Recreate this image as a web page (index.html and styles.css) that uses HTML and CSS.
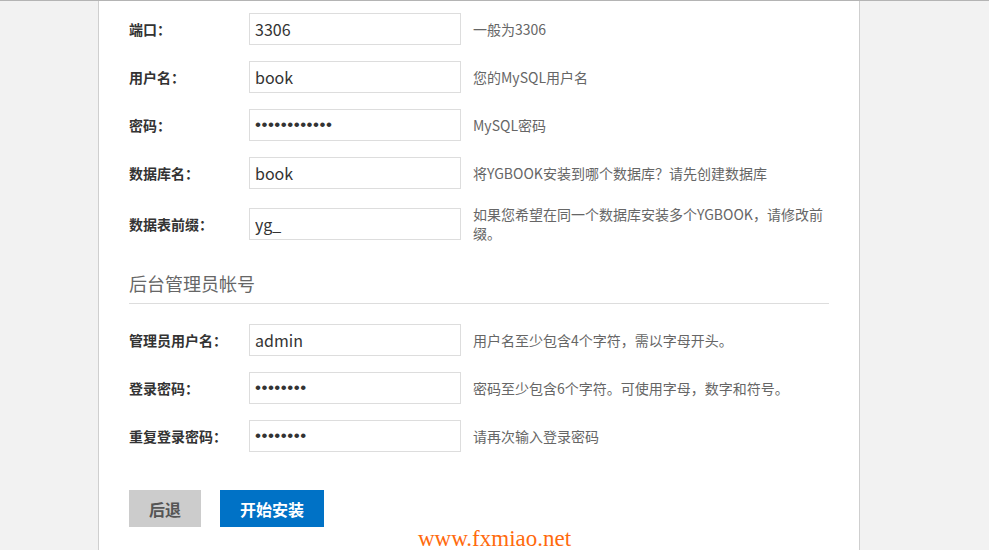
FILE: index.html
```html
<!DOCTYPE html>
<html lang="zh-CN">
  <head>
    <meta charset="UTF-8" />
    <title>YGBOOK 安装</title>
    <link rel="stylesheet" href="styles.css">
  </head>

  <body>
    <div class="main">
      <form class="install-form">
        <!-- 数据库 -->
        <div class="row">
          <label class="label">端口：</label>
          <input class="field" type="text" value="3306" />
          <span class="tip">一般为3306</span>
        </div>
        <div class="row">
          <label class="label">用户名：</label>
          <input class="field" type="text" value="book" />
          <span class="tip">您的MySQL用户名</span>
        </div>
        <div class="row">
          <label class="label">密码：</label>
          <input class="field" type="password" value="123456789012" />
          <span class="tip">MySQL密码</span>
        </div>
        <div class="row">
          <label class="label">数据库名：</label>
          <input class="field" type="text" value="book" />
          <span class="tip">将YGBOOK安装到哪个数据库？请先创建数据库</span>
        </div>
        <div class="row">
          <label class="label">数据表前缀：</label>
          <input class="field" type="text" value="yg_" />
          <span class="tip">如果您希望在同一个数据库安装多个YGBOOK，请修改前缀。</span>
        </div>

        <h3 class="section-title">后台管理员帐号</h3>

        <!-- 管理员 -->
        <div class="row">
          <label class="label">管理员用户名：</label>
          <input class="field" type="text" value="admin" />
          <span class="tip">用户名至少包含4个字符，需以字母开头。</span>
        </div>
        <div class="row">
          <label class="label">登录密码：</label>
          <input class="field" type="password" value="12345678" />
          <span class="tip">密码至少包含6个字符。可使用字母，数字和符号。</span>
        </div>
        <div class="row">
          <label class="label">重复登录密码：</label>
          <input class="field" type="password" value="12345678" />
          <span class="tip">请再次输入登录密码</span>
        </div>

        <div class="actions">
          <button type="button" class="btn btn-back">后退</button>
          <button type="button" class="btn btn-install">开始安装</button>
        </div>
      </form>
    </div>

    <div class="watermark">www.fxmiao.net</div>
  </body>
</html>
```

FILE: styles.css
```css
html,
body {
  margin: 0;
  padding: 0;
  height: 100%;
  background-color: #f2f2f2;
  font-family: "Noto Sans CJK SC", "Noto Sans", sans-serif;
  font-size: 14px;
  color: #333;
}

body {
  border-top: 1px solid #b4b4b4;
  box-sizing: border-box;
  overflow: hidden;
}

.main {
  width: 700px;
  min-height: 100%;
  margin-left: 98px;
  padding: 12px 30px 0;
  background-color: #fff;
  border-left: 1px solid #cfcfcf;
  border-right: 1px solid #cfcfcf;
}

.row {
  display: flex;
  align-items: center;
  min-height: 32px;
  margin-bottom: 16px;
}

.label {
  width: 120px;
  flex-shrink: 0;
  font-weight: bold;
  line-height: 20px;
}

.field {
  box-sizing: border-box;
  width: 212px;
  height: 32px;
  flex-shrink: 0;
  margin: 0 12px 0 0;
  padding: 0 5px;
  border: 1px solid #ddd;
  font-family: "Noto Sans CJK SC", "Noto Sans", sans-serif;
  font-size: 16px;
  color: #333;
  outline: none;
}

.field[type="password"] {
  font-family: "Liberation Sans", sans-serif;
  font-size: 17px;
  letter-spacing: 0.5px;
}

.tip {
  width: 356px;
  color: #666;
  line-height: 19px;
}

.section-title {
  margin: 28px 0 20px;
  padding-bottom: 8px;
  border-bottom: 1px solid #ddd;
  font-size: 18px;
  font-weight: normal;
  line-height: 24px;
  color: #666;
}

.actions {
  display: flex;
  gap: 19px;
  margin-top: 38px;
}

.btn {
  height: 37px;
  padding: 0 20px;
  border: none;
  font-family: "Noto Sans CJK SC", "Noto Sans", sans-serif;
  font-size: 16px;
  font-weight: bold;
  cursor: pointer;
}

.btn-back {
  background-color: #ccc;
  color: #555;
}

.btn-install {
  background-color: #0072c6;
  color: #fff;
}

.watermark {
  position: absolute;
  left: 418px;
  top: 529px;
  font-family: "Liberation Serif", serif;
  font-size: 23px;
  line-height: 20px;
  color: #ff6a0d;
}
```
